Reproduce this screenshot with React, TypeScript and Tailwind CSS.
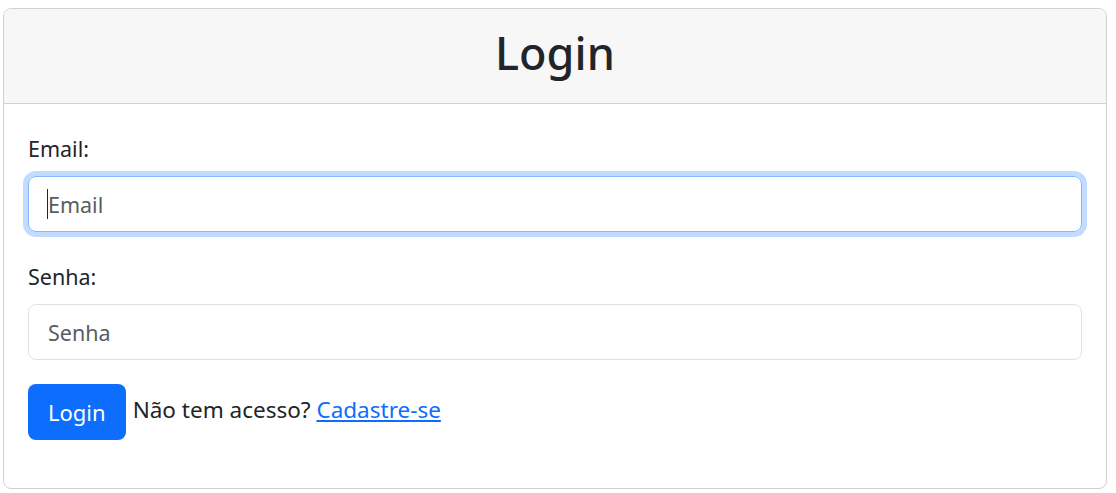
import React from "react";

export default function App() {
  return (
    <div className="min-h-screen bg-white pl-[3px] pr-[9px] pt-[8px] font-['Noto_Sans',sans-serif] text-[#212529]">
      <div className="rounded-[8px] border border-[#d1d1d1] bg-white">
        <div className="flex h-[95px] items-center justify-center rounded-t-[7px] border-b border-[#d1d1d1] bg-[#f7f7f7] pb-[8px]">
          <h1 className="text-[45px] font-medium leading-none">Login</h1>
        </div>

        <form className="px-[24px] pt-[30px] pb-[48px]" onSubmit={(e) => e.preventDefault()}>
          <label htmlFor="email" className="block text-[21.5px] leading-[30px]">
            Email:
          </label>
          <div className="relative mt-[12px]">
            <input
              id="email"
              type="email"
              placeholder="Email"
              className="block h-[56px] w-full rounded-[8px] border border-[#86b7fe] px-[19px] text-[21.5px] text-[#212529] shadow-[0_0_0_5px_rgba(13,110,253,0.25)] outline-none placeholder:text-[#595c5f]"
            />
            {/* caret of the focused field */}
            <span className="pointer-events-none absolute left-[19px] top-[13px] h-[30px] w-px bg-[#212529]" />
          </div>

          <label htmlFor="senha" className="mt-[30px] block text-[21.5px] leading-[30px]">
            Senha:
          </label>
          <input
            id="senha"
            type="password"
            placeholder="Senha"
            className="mt-[12px] block h-[56px] w-full rounded-[8px] border border-[#dee2e6] px-[19px] text-[21.5px] text-[#212529] outline-none placeholder:text-[#595c5f]"
          />

          <div className="mt-[24px] flex items-center gap-[7px] text-[22.5px]">
            <button
              type="submit"
              className="h-[56px] rounded-[8px] bg-[#0d6efd] px-[20px] text-[22px] text-white"
            >
              Login
            </button>
            <span className="-mt-[4px]">
              Não tem acesso?{" "}
              <a href="#" className="text-[#0d6efd] underline">
                Cadastre-se
              </a>
            </span>
          </div>
        </form>
      </div>
    </div>
  );
}
